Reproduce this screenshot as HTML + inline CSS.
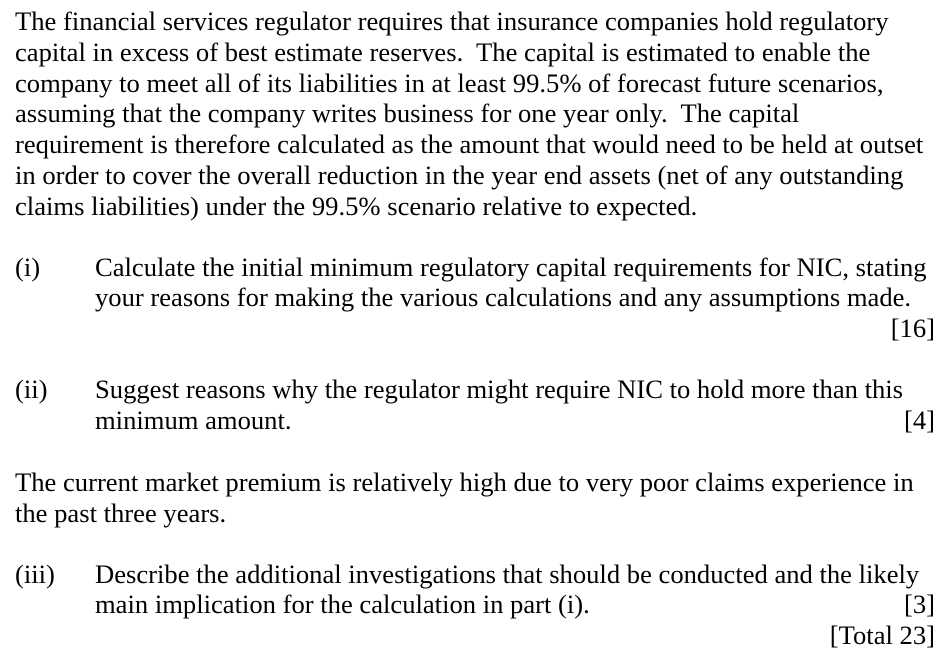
<!DOCTYPE html>
<html><head><meta charset="utf-8"><style>
body{margin:0;background:#fff;width:946px;height:672px;position:relative;overflow:hidden;font-family:"Liberation Serif","Times New Roman",serif;font-size:26.6px;color:#000}
.l{position:absolute;left:15px;white-space:nowrap;line-height:30px;height:30px}
.i{left:95px}
.r{left:auto;right:11px}
</style></head><body>
<div class="l" style="top:6px">The financial services regulator requires that insurance companies hold regulatory</div>
<div class="l" style="top:37px">capital in excess of best estimate reserves.&nbsp; The capital is estimated to enable the</div>
<div class="l" style="top:68px">company to meet all of its liabilities in at least 99.5% of forecast future scenarios,</div>
<div class="l" style="top:98px">assuming that the company writes business for one year only.&nbsp; The capital</div>
<div class="l" style="top:129px">requirement is therefore calculated as the amount that would need to be held at outset</div>
<div class="l" style="top:160px">in order to cover the overall reduction in the year end assets (net of any outstanding</div>
<div class="l" style="top:191px">claims liabilities) under the 99.5% scenario relative to expected.</div>

<div class="l" style="top:252px">(i)</div>
<div class="l i" style="top:252px">Calculate the initial minimum regulatory capital requirements for NIC, stating</div>
<div class="l i" style="top:282px">your reasons for making the various calculations and any assumptions made.</div>
<div class="l r" style="top:313px">[16]</div>

<div class="l" style="top:374px">(ii)</div>
<div class="l i" style="top:374px">Suggest reasons why the regulator might require NIC to hold more than this</div>
<div class="l i" style="top:405px">minimum amount.</div>
<div class="l r" style="top:405px">[4]</div>

<div class="l" style="top:467px">The current market premium is relatively high due to very poor claims experience in</div>
<div class="l" style="top:498px">the past three years.</div>

<div class="l" style="top:559px">(iii)</div>
<div class="l i" style="top:559px">Describe the additional investigations that should be conducted and the likely</div>
<div class="l i" style="top:589px">main implication for the calculation in part (i).</div>
<div class="l r" style="top:589px">[3]</div>
<div class="l r" style="top:620px">[Total 23]</div>
</body></html>
